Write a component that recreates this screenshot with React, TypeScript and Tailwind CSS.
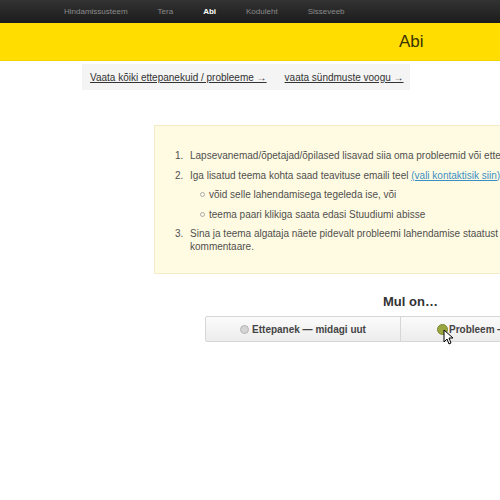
import React from "react";

export default function App() {
  const font = { fontFamily: '"Liberation Sans", Arial, sans-serif' };
  return (
    <div className="relative w-[500px] h-[500px] overflow-hidden bg-white" style={font}>
      {/* top nav */}
      <div className="h-[23px] bg-gradient-to-b from-[#333333] to-[#1c1c1c] flex items-center pl-[64px] gap-[30px] text-[8px] text-[#8a8a8a] whitespace-nowrap">
        <span>Hindamissusteem</span>
        <span>Tera</span>
        <span className="text-white font-bold">Abi</span>
        <span>Koduleht</span>
        <span>Sisseveeb</span>
      </div>
      {/* yellow header */}
      <div className="h-[38px] bg-[#ffdd00] border-b border-[#f2d600] flex items-center pl-[399px]">
        <span className="text-[17px] text-[#3a3300]">Abi</span>
      </div>
      {/* links bar */}
      <div className="mt-[3px] ml-[82px] w-[328px] h-[26px] bg-[#f4f4f4] flex items-center pl-[8px] gap-[18px] text-[10px] text-[#333] whitespace-nowrap">
        <span className="underline">Vaata kõiki ettepanekuid / probleeme →</span>
        <span className="underline">vaata sündmuste voogu →</span>
      </div>
      {/* info box */}
      <div className="mt-[35px] ml-[154px] w-[420px] h-[149px] bg-[#fffbe2] border border-[#f3ecc6] pt-[23px] pl-[20px] text-[10px] leading-[13px] text-[#4f4f4f] whitespace-nowrap">
        <div className="flex flex-col gap-[6.5px]">
          <div className="flex"><span className="w-[15px]">1.</span><span>Lapsevanemad/õpetajad/õpilased lisavad siia oma probleemid või ettepanekud</span></div>
          <div className="flex"><span className="w-[15px]">2.</span><span>Iga lisatud teema kohta saad teavituse emaili teel <span className="text-[#3b8fc4] underline">(vali kontaktisik siin)</span></span></div>
          <div className="flex items-center pl-[25px]"><span className="w-[5px] h-[5px] rounded-full border border-[#aaa] mr-[4px]"></span><span>võid selle lahendamisega tegeleda ise, või</span></div>
          <div className="flex items-center pl-[25px]"><span className="w-[5px] h-[5px] rounded-full border border-[#aaa] mr-[4px]"></span><span>teema paari klikiga saata edasi Stuudiumi abisse</span></div>
          <div className="flex"><span className="w-[15px]">3.</span><span>Sina ja teema algataja näete pidevalt probleemi lahendamise staatust ja<br />kommentaare.</span></div>
        </div>
      </div>
      {/* Mul on */}
      <div className="mt-[20px] pl-[383px] text-[13px] font-bold text-[#333] leading-[16px]">Mul on…</div>
      {/* button group */}
      <div className="mt-[6px] ml-[205px] w-[400px] h-[26px] flex border border-[#d6d6d6] rounded-[2px] bg-gradient-to-b from-[#fbfbfb] to-[#ececec] text-[10px] font-bold text-[#444] whitespace-nowrap">
        <div className="w-[195px] flex items-center justify-center border-r border-[#d6d6d6]">
          <span className="w-[9px] h-[9px] rounded-full bg-[#d4d4d4] border border-[#b5b5b5] mr-[3px]"></span>
          <span>Ettepanek — midagi uut</span>
        </div>
        <div className="flex-1 flex items-center pl-[36px]">
          <span className="w-[11px] h-[11px] rounded-full bg-[#9aa640] border border-[#7c8a30] mr-[1px]"></span>
          <span>Probleem — midagi on katki</span>
        </div>
      </div>
      {/* cursor */}
      <svg className="absolute left-[443px] top-[329px]" width="10" height="16" viewBox="0 0 10 16">
        <path d="M1 1 L1 13 L4 10 L6 15 L8 14 L6 9 L10 9 Z" fill="#fff" stroke="#000" strokeWidth="1" />
      </svg>
    </div>
  );
}
